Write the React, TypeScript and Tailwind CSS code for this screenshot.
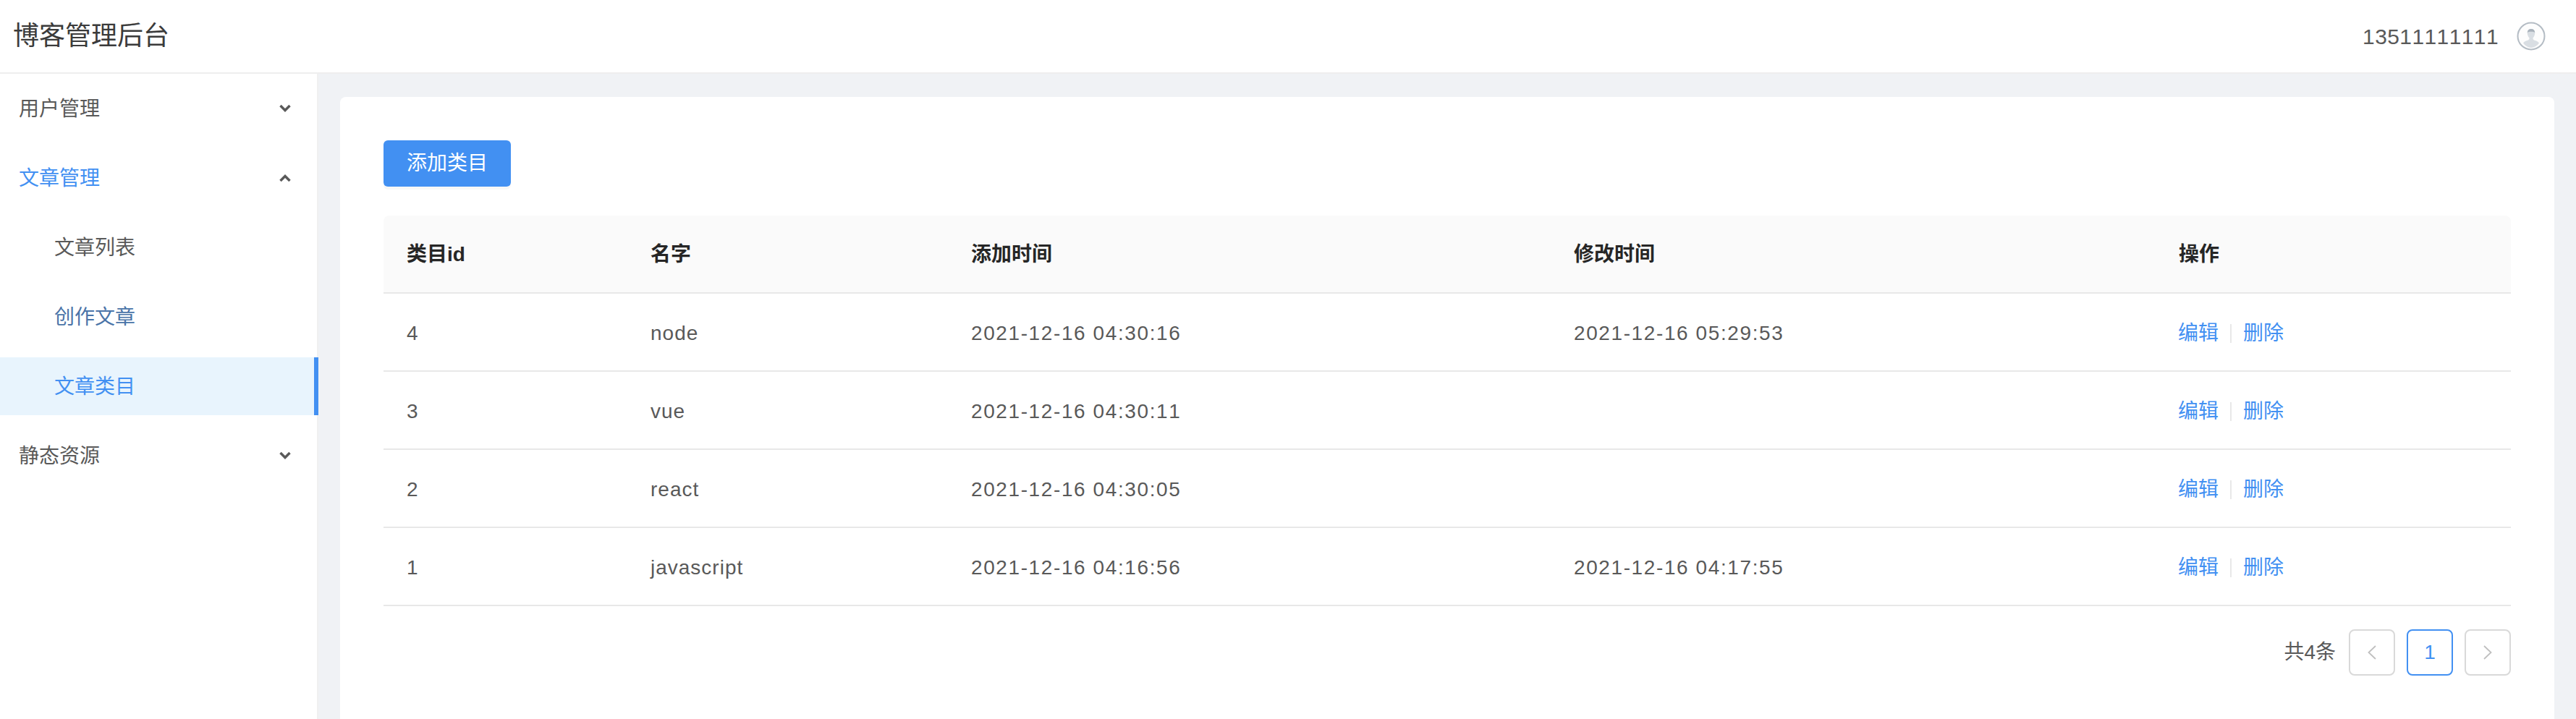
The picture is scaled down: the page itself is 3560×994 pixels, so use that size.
const rows = [
    { id: 4, name: 'node', created: '2021-12-16 04:30:16', updated: '2021-12-16 05:29:53' },
    { id: 3, name: 'vue', created: '2021-12-16 04:30:11', updated: '' },
    { id: 2, name: 'react', created: '2021-12-16 04:30:05', updated: '' },
    { id: 1, name: 'javascript', created: '2021-12-16 04:16:56', updated: '2021-12-16 04:17:55' },
]

function Arrow({ up = false }: { up?: boolean }) {
    return (
        <svg width="16" height="12" viewBox="0 0 16 12" fill="none" className="ml-auto mr-[36px] -mt-[2px] text-[#595959]">
            <path d={up ? 'M1.5 10 L8 3.500 L14.500 10' : 'M1.5 2 L8 8.500 L14.500 2'} stroke="currentColor" strokeWidth="3.5" />
        </svg>
    )
}

function Avatar() {
    return (
        <svg width="40" height="40" viewBox="0 0 40 40">
            <circle cx="20" cy="20" r="18.5" fill="#fdfdfd" stroke="#b4bcc4" strokeWidth="2" />
            <path d="M20 10c3.600 0 5.600 2.600 5.200 6.400-.3 2.600-1.500 4.600-2.600 5.800-.4 2 .6 3 2.800 3.800 2.200.8 4.400 1.600 5.600 3.400A15 15 0 0 1 20 36a15 15 0 0 1-11-6.600c1.200-1.800 3.400-2.600 5.600-3.400 2.200-.8 3.200-1.800 2.800-3.800-1.100-1.200-2.300-3.200-2.600-5.800-.4-3.800 1.600-6.400 5.200-6.400z" fill="#d9dee3" />
            <path d="M14.800 15c.2-3.200 2.200-5 5.200-5s5 1.800 5.200 5c-2-1.600-8.400-1.600-10.400 0z" fill="#a9b2bb" />
        </svg>
    )
}

function PageArrow({ path }: { path: string }) {
    return (
        <div className="w-[64px] h-[64px] flex items-center justify-center rounded-[8px] border-2 border-[#d9d9d9]">
            <svg width="14" height="20" viewBox="0 0 14 20" fill="none">
                <path d={path} stroke="#bfbfbf" strokeWidth="1.800" />
            </svg>
        </div>
    )
}

export default function App() {
    return (
        <div className="h-screen flex flex-col overflow-hidden bg-[#f0f2f5] text-[28px] text-[#595959] [font-kerning:none] font-['Liberation_Sans','Noto_Sans_CJK_SC',sans-serif]">
            {/* Header */}
            <header className="h-[102px] shrink-0 flex items-center justify-between pl-[18px] pr-[42px] bg-white border-b-2 border-[#eeeeee]">
                <h1 className="text-[36px] font-normal text-[#3b3b3b]">博客管理后台</h1>
                <div className="flex items-center gap-[25px]">
                    <span className="text-[30px] tracking-[0.4px]">13511111111</span>
                    <Avatar />
                </div>
            </header>

            <main className="flex-1 flex min-h-0">
                {/* Sidebar */}
                <aside className="w-[440px] shrink-0 bg-white border-r-2 border-[#f0f0f0] pt-[8px]">
                    <div className="h-[80px] mb-[16px] pl-[26px] pt-[2px] flex items-center">
                        用户管理
                        <Arrow />
                    </div>
                    <div className="h-[80px] mb-[16px] pl-[26px] pt-[2px] flex items-center text-[#4290f2]">
                        文章管理
                        <Arrow up />
                    </div>
                    <div className="h-[80px] mb-[16px] pl-[75px] pt-[2px] flex items-center">文章列表</div>
                    <div className="h-[80px] mb-[16px] pl-[75px] pt-[2px] flex items-center text-[#4a74a8]">创作文章</div>
                    <div className="h-[80px] mb-[16px] -mr-[2px] pl-[75px] pt-[2px] flex items-center bg-[#e8f4fd] text-[#4290f2] border-r-[6px] border-[#4290f2]">文章类目</div>
                    <div className="h-[80px] mb-[16px] pl-[26px] pt-[2px] flex items-center">
                        静态资源
                        <Arrow />
                    </div>
                </aside>

                {/* Content */}
                <section className="flex-1 min-w-0 pl-[30px] pr-[30px] pt-[32px]">
                    <div className="h-full bg-white rounded-t-[8px] p-[60px]">
                        <button className="h-[64px] px-[32px] rounded-[6px] bg-[#4290f2] text-white shadow-[0_4px_0_rgba(0,0,0,0.03)]">添加类目</button>

                        <table className="w-full mt-[40px] table-fixed border-separate border-spacing-0">
                            <colgroup>
                                <col className="w-[337px]" />
                                <col className="w-[443px]" />
                                <col className="w-[833px]" />
                                <col className="w-[836px]" />
                                <col />
                            </colgroup>
                            <thead>
                                <tr className="h-[108px] text-left text-[#262626] [&>th]:bg-[#fafafa] [&>th]:border-b-2 [&>th]:border-[#e8e8e8] [&>th]:pl-[32px] [&>th]:pt-[2px] [&>th]:font-bold">
                                    <th className="rounded-tl-[8px]">类目id</th>
                                    <th>名字</th>
                                    <th>添加时间</th>
                                    <th>修改时间</th>
                                    <th className="rounded-tr-[8px]">操作</th>
                                </tr>
                            </thead>
                            <tbody>
                                {rows.map((row) => (
                                    <tr key={row.id} className="h-[108px] [&>td]:border-b-2 [&>td]:border-[#e8e8e8] [&>td]:pl-[32px] [&>td]:pt-[4px]">
                                        <td>{row.id}</td>
                                        <td className="tracking-[1px]">{row.name}</td>
                                        <td className="tracking-[1.6px]">{row.created}</td>
                                        <td className="tracking-[1.6px]">{row.updated}</td>
                                        <td className="text-[#4290f2]">
                                            <div className="flex items-center -ml-[1px]">
                                                <span>编辑</span>
                                                <span className="w-[2px] h-[26px] mx-[16px] bg-[#e8e8e8]" />
                                                <span>删除</span>
                                            </div>
                                        </td>
                                    </tr>
                                ))}
                            </tbody>
                        </table>

                        {/* Pagination */}
                        <div className="mt-[32px] flex items-center justify-end gap-[16px]">
                            <span className="mr-[2px]">共4条</span>
                            <PageArrow path="M12 1 L2.500 10 L12 19" />
                            <div className="w-[64px] h-[64px] flex items-center justify-center rounded-[8px] border-2 border-[#4290f2] text-[#4290f2]">1</div>
                            <PageArrow path="M2 1 L11.500 10 L2 19" />
                        </div>
                    </div>
                </section>
            </main>
        </div>
    )
}
